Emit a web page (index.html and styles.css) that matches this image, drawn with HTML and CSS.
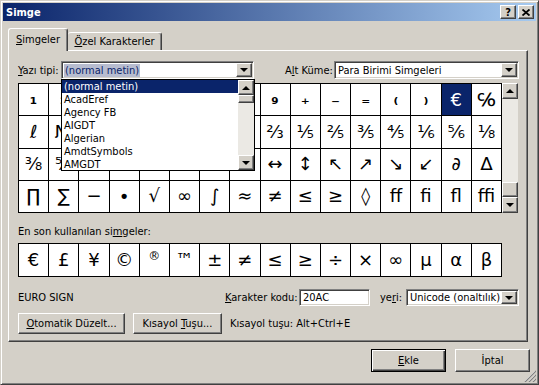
FILE: index.html
```html
<!DOCTYPE html>
<html lang="tr">
<head>
    <meta charset="UTF-8">
    <title>Simge</title>
    <link rel="stylesheet" href="styles.css">
</head>
<body>
<div class="window">
    <div class="titlebar">
        <span class="title">Simge</span>
        <span class="tbtn">?</span>
        <span class="tbtn"><svg width="8" height="7" viewBox="0 0 8 7"><path d="M0.5 0.5L7.5 6.5M7.5 0.5L0.5 6.5" stroke="#000" stroke-width="1.8"/></svg></span>
    </div>
    <div class="content">
        <div class="tabs">
            <div class="tab tab-active"><span><u>S</u>imgeler</span></div>
            <div class="tab tab-other"><span><u>Ö</u>zel Karakterler</span></div>
        </div>
        <div class="panel">
            <div class="font-row">
                <span class="label label-font"><u>Y</u>azı tipi:</span>
                <div class="combo combo-font">
                    <span class="combo-value"><span class="sel-text">(normal metin)</span></span>
                    <span class="combo-btn"><i class="tri-down"></i></span>
                    <div class="dropdown">
                        <ul class="dropdown-items">
                            <li class="active">(normal metin)</li>
                            <li>AcadEref</li>
                            <li>Agency FB</li>
                            <li>AIGDT</li>
                            <li>Algerian</li>
                            <li>AmdtSymbols</li>
                            <li>AMGDT</li>
                        </ul>
                        <div class="vscroll vscroll-list">
                            <span class="sbtn"><i class="tri-up"></i></span>
                            <span class="sthumb sthumb-top"></span>
                            <span class="strack"></span>
                            <span class="sbtn"><i class="tri-down"></i></span>
                        </div>
                    </div>
                </div>
                <span class="label label-subset">A<u>l</u>t Küme:</span>
                <div class="combo combo-subset">
                    <span class="combo-value">Para Birimi Simgeleri</span>
                    <span class="combo-btn"><i class="tri-down"></i></span>
                </div>
            </div>

            <div class="grid-wrap">
                <div class="charmap" id="charmap"></div>
                <div class="vscroll vscroll-map">
                    <span class="sbtn"><i class="tri-up"></i></span>
                    <span class="strack"></span>
                    <span class="sthumb"></span>
                    <span class="sbtn"><i class="tri-down"></i></span>
                </div>
            </div>

            <div class="recent-label">En son kullanılan si<u>m</u>geler:</div>
            <div class="charmap recent" id="recent"></div>

            <div class="info-row">
                <span class="char-name">EURO SIGN</span>
                <span class="label label-code"><u>K</u>arakter kodu:</span>
                <span class="field field-code">20AC</span>
                <span class="label label-from">ye<u>r</u>i:</span>
                <div class="combo combo-from">
                    <span class="combo-value">Unicode (onaltılık)</span>
                    <span class="combo-btn"><i class="tri-down"></i></span>
                </div>
            </div>

            <div class="button-row">
                <span class="button btn-auto"><span><u>O</u>tomatik Düzelt...</span></span>
                <span class="button btn-key"><span>Kısayol <u>T</u>uşu...</span></span>
                <span class="shortcut">Kısayol tuşu: Alt+Ctrl+E</span>
            </div>
        </div>

        <div class="footer">
            <span class="button button-wide button-default"><span><u>E</u>kle</span></span>
            <span class="button button-wide"><span>İptal</span></span>
        </div>
    </div>
    <svg class="grip" width="12" height="12" viewBox="0 0 12 12">
        <path d="M11 1L1 11M11 5L5 11M11 9L9 11" stroke="#fff" stroke-width="1"/>
        <path d="M12 1L1 12M12 5L5 12M12 9L9 12" stroke="#808080" stroke-width="1.2"/>
    </svg>
</div>

<script>
    // cells in rows 0-1, columns 2-6 sit fully under the open font list
    const rows = [
        [...'₁₂     ₈₉₊₋₌₍₎€℅'],
        [...'ℓ№     ⅓⅔⅕⅖⅗⅘⅙⅚⅛'],
        [...'⅜⅝⅞⅟←↑→↓↔↕↖↗↘↙∂∆'],
        [...'∏∑−∙√∞∫≈≠≤≥◊ﬀﬁﬂﬃ']
    ];
    const recent = [...'€£¥©®™±≠≤≥÷×∞µαβ'];

    let map = document.getElementById('charmap');
    rows.forEach((row, r) => {
        row.forEach((ch, c) => {
            let cls = 'cell';
            if (r === 0 && c < 14) cls += ' sub';
            if (r === 0 && c === 14) cls += ' selected';
            map.innerHTML += `<span class="${cls}">${ch.trim()}</span>`;
        });
    });

    let rec = document.getElementById('recent');
    recent.forEach(ch => {
        let cls = 'cell';
        if (ch === '®') cls += ' sup';
        rec.innerHTML += `<span class="${cls}">${ch}</span>`;
    });
</script>
</body>
</html>
```

FILE: styles.css
```css
body {
    margin: 0;
    font-family: "DejaVu Sans Condensed", "DejaVu Sans", sans-serif;
    font-stretch: condensed;
    font-size: 11px;
    color: #000;
}
u {
    text-decoration: underline;
    text-underline-offset: 1px;
}
.window {
    position: relative;
    width: 539px;
    height: 385px;
    box-sizing: border-box;
    background: #d4d0c8;
    border: 1px solid;
    border-color: #d4d0c8 #404040 #404040 #d4d0c8;
    box-shadow: inset 1px 1px #fff, inset -1px -1px #808080;
    padding: 2px;
}
.titlebar {
    height: 18px;
    display: flex;
    align-items: center;
    gap: 2px;
    padding: 0 2px 0 3px;
    background: linear-gradient(to right, #0a246a, #a6caf0);
}
.title {
    flex: 1;
    color: #fff;
    font-weight: bold;
}
.tbtn, .button, .combo-btn, .sbtn, .sthumb {
    box-sizing: border-box;
    background: #d4d0c8;
    border: 1px solid;
    border-color: #fff #404040 #404040 #fff;
    box-shadow: inset -1px -1px #808080;
}
.tbtn {
    width: 16px;
    height: 14px;
    display: flex;
    align-items: center;
    justify-content: center;
    font-weight: bold;
    line-height: 1;
}
.content {
    padding: 7px 6px 0 5px;
}

/* tabs */
.tabs {
    display: flex;
    align-items: flex-end;
    height: 22px;
}
.tab {
    box-sizing: border-box;
    display: flex;
    align-items: center;
    justify-content: center;
    background: #d4d0c8;
    border: 1px solid;
    border-color: #fff #404040 transparent #fff;
    border-bottom: none;
    box-shadow: inset -1px 0 #808080;
    border-radius: 3px 3px 0 0;
}
.tab-active {
    position: relative;
    z-index: 1;
    width: 60px;
    height: 23px;
    margin-bottom: -1px;
    padding-bottom: 2px;
}
.tab-other {
    width: 94px;
    height: 18px;
    border-left: none;
}
.panel {
    box-sizing: border-box;
    width: 520px;
    height: 292px;
    border: 1px solid;
    border-color: #fff #404040 #404040 #fff;
    box-shadow: inset -1px -1px #808080;
    padding: 10px 0 0 9px;
}

/* fields */
.font-row, .info-row, .button-row {
    display: flex;
    align-items: center;
}
.label {
    white-space: nowrap;
}
.label-font { width: 43px; }
.label-subset { width: 49px; margin-left: 31px; }
.combo, .field {
    position: relative;
    box-sizing: border-box;
    height: 18px;
    display: flex;
    align-items: center;
    background: #fff;
    border: 1px solid;
    border-color: #808080 #fff #fff #808080;
    box-shadow: inset 1px 1px #404040, inset -1px -1px #d4d0c8;
}
.combo-value {
    flex: 1;
    padding-left: 3px;
    white-space: nowrap;
    overflow: hidden;
}
.sel-text {
    background: #b7bccf;
    color: #0a246a;
    padding: 0 1px;
    margin-left: -1px;
}
.combo-btn {
    width: 16px;
    height: 14px;
    margin-right: 1px;
    display: flex;
    align-items: center;
    justify-content: center;
}
.combo-font { width: 193px; }
.combo-subset { width: 185px; }
.tri-down, .tri-up {
    display: block;
    width: 0;
    height: 0;
    border-left: 4px solid transparent;
    border-right: 4px solid transparent;
}
.tri-down { border-top: 4px solid #000; }
.tri-up { border-bottom: 4px solid #000; }

/* open font list */
.dropdown {
    position: absolute;
    z-index: 5;
    top: 17px;
    left: -1px;
    width: 194px;
    height: 92px;
    box-sizing: border-box;
    display: flex;
    background: #fff;
    border: 1px solid #000;
}
.dropdown-items {
    flex: 1;
    list-style: none;
    margin: 0;
    padding: 0;
}
.dropdown-items li {
    height: 13px;
    line-height: 13px;
    padding-left: 2px;
    white-space: nowrap;
}
.dropdown-items li.active {
    background: #0a246a;
    color: #fff;
}
.vscroll {
    width: 16px;
    display: flex;
    flex-direction: column;
    background: #ebe9e4;
}
.sbtn {
    width: 16px;
    height: 16px;
    display: flex;
    align-items: center;
    justify-content: center;
}
.vscroll-list .sbtn { height: 15px; }
.strack { flex: 1; }
.sthumb {
    width: 16px;
    height: 15px;
}
.sthumb-top { height: 8px; }

/* character grid */
.grid-wrap {
    display: flex;
    margin-top: 4px;
    height: 130px;
}
.charmap {
    box-sizing: border-box;
    width: 484px;
    height: 130px;
    display: grid;
    grid-template-columns: repeat(16, 1fr);
    grid-template-rows: repeat(4, 1fr);
    gap: 1px;
    background: #000;
    border: 1px solid #000;
}
.cell {
    display: flex;
    align-items: center;
    justify-content: center;
    background: #fff;
    font-family: "DejaVu Sans", sans-serif;
    font-stretch: normal;
    font-size: 18px;
    line-height: 1;
    overflow: hidden;
}
.cell.sub {
    font-size: 17px;
    font-weight: bold;
    padding-bottom: 2px;
}
.cell.selected {
    background: #0a246a;
    color: #fff;
}
.cell.sup {
    font-size: 12px;
    align-items: flex-start;
    padding-top: 6px;
}
.recent-label {
    margin-top: 13px;
    height: 12px;
    line-height: 12px;
}
.recent {
    margin-top: 5px;
    height: 34px;
    grid-template-rows: 1fr;
}

/* bottom of panel */
.info-row {
    margin-top: 12px;
    height: 17px;
}
.char-name { width: 207px; }
.label-code { width: 74px; }
.field-code {
    width: 71px;
    height: 17px;
    padding-left: 3px;
}
.label-from { width: 26px; margin-left: 10px; }
.combo-from { width: 113px; height: 17px; }
.combo-from .combo-btn { height: 13px; }
.button-row {
    margin-top: 7px;
    gap: 8px;
}
.button {
    height: 21px;
    display: flex;
    align-items: center;
    justify-content: center;
    white-space: nowrap;
}
.btn-auto { width: 107px; }
.btn-key { width: 89px; }
.footer {
    display: flex;
    justify-content: flex-end;
    gap: 9px;
    margin-top: 7px;
}
.button-wide {
    width: 75px;
    height: 23px;
}
.button-default {
    border-color: #000;
    box-shadow: inset 1px 1px #fff, inset -1px -1px #404040, inset -2px -2px #808080;
}
.grip {
    position: absolute;
    right: 2px;
    bottom: 2px;
}
```
